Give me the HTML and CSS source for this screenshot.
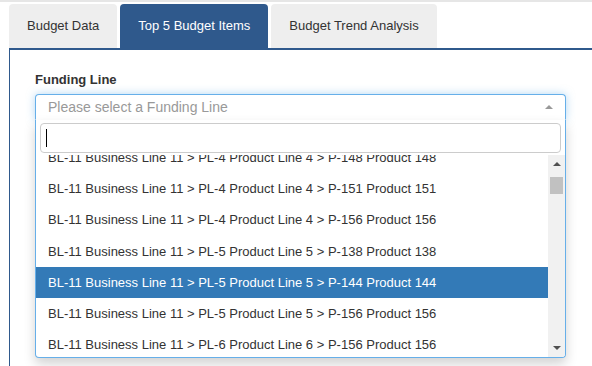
FILE: index.html
```html
<!DOCTYPE html>
<html lang="en">
  <head>
    <meta charset="UTF-8">
    <meta name="viewport" content="width=device-width, initial-scale=1.0">
    <title>Top 5 Budget Items</title>
    <link rel="stylesheet" href="styles.css">
  </head>
  <body>
    <div class="topline"></div>

    <!-- Tabs -->
    <ul class="tabs">
      <li class="tab">Budget Data</li>
      <li class="tab active">Top 5 Budget Items</li>
      <li class="tab">Budget Trend Analysis</li>
    </ul>

    <div class="panel">
      <label class="field-label">Funding Line</label>

      <div class="select">
        <span class="placeholder">Please select a Funding Line</span>
        <span class="arrow"></span>
      </div>

      <!-- Open dropdown -->
      <div class="dropdown">
        <div class="search">
          <div class="search-box"><span class="caret"></span></div>
        </div>
        <div class="results">
          <ul class="options">
            <li class="option first">BL-11 Business Line 11 &gt; PL-4 Product Line 4 &gt; P-148 Product 148</li>
            <li class="option">BL-11 Business Line 11 &gt; PL-4 Product Line 4 &gt; P-151 Product 151</li>
            <li class="option">BL-11 Business Line 11 &gt; PL-4 Product Line 4 &gt; P-156 Product 156</li>
            <li class="option">BL-11 Business Line 11 &gt; PL-5 Product Line 5 &gt; P-138 Product 138</li>
            <li class="option highlighted">BL-11 Business Line 11 &gt; PL-5 Product Line 5 &gt; P-144 Product 144</li>
            <li class="option">BL-11 Business Line 11 &gt; PL-5 Product Line 5 &gt; P-156 Product 156</li>
            <li class="option">BL-11 Business Line 11 &gt; PL-6 Product Line 6 &gt; P-156 Product 156</li>
          </ul>
          <div class="scrollbar">
            <span class="sb-up"></span>
            <span class="sb-thumb"></span>
            <span class="sb-space"></span>
            <span class="sb-down"></span>
          </div>
        </div>
      </div>
    </div>
  </body>
</html>
```

FILE: styles.css
```css
body {
  margin: 0;
  overflow: hidden;
  font-family: "Liberation Sans", Arial, sans-serif;
  font-size: 13px;
  color: #333;
  background: #fff;
}

.topline {
  height: 2px;
  background: #e6e6e6;
  margin-bottom: 2px;
}

.tabs {
  list-style: none;
  margin: 0;
  padding: 0 0 0 9px;
  display: flex;
  gap: 3px;
}

.tab {
  height: 44px;
  line-height: 44px;
  padding: 0 18px;
  background: #eee;
  border-radius: 4px 4px 0 0;
  white-space: nowrap;
}

.tab.active {
  background: #2f598c;
  color: #fff;
}

.panel {
  margin-left: 9px;
  border-top: 2px solid #2f598c;
  border-left: 1px solid #2f598c;
  height: calc(100vh - 48px);
  box-sizing: border-box;
  padding: 20px 0 0 25px;
}

.field-label {
  display: block;
  font-weight: bold;
  line-height: 20px;
  margin-bottom: 4px;
}

.select {
  width: 531px;
  height: 26px;
  box-sizing: border-box;
  border: 1px solid #66afe9;
  border-bottom-color: #fff;
  border-radius: 4px 4px 0 0;
  box-shadow: 0 0 8px rgba(102, 175, 233, 0.5);
  display: flex;
  align-items: center;
  padding: 0 12px;
  background: #fff;
}

.placeholder {
  flex: 1;
  color: #999;
  font-size: 14px;
}

.arrow {
  width: 0;
  height: 0;
  border-left: 4px solid transparent;
  border-right: 4px solid transparent;
  border-bottom: 4px solid #999;
}

.dropdown {
  width: 531px;
  box-sizing: border-box;
  border: 1px solid #66afe9;
  border-top: none;
  border-radius: 0 0 4px 4px;
  box-shadow: 0 6px 12px rgba(0, 0, 0, 0.175);
  background: #fff;
  overflow: hidden;
}

.search {
  padding: 3px 4px 2px;
}

.search-box {
  height: 30px;
  box-sizing: border-box;
  border: 1px solid #ccc;
  border-radius: 4px;
  display: flex;
  align-items: center;
  padding-left: 5px;
}

.caret {
  width: 1px;
  height: 18px;
  background: #000;
}

.results {
  display: flex;
  height: 202px;
}

.options {
  list-style: none;
  margin: 0;
  padding: 0;
  flex: 1;
  overflow: hidden;
}

.option {
  padding: 6px 12px;
  line-height: 19.2px;
  white-space: nowrap;
}

.option.first {
  margin-top: -13px;
}

.option.highlighted {
  background: #337ab7;
  color: #fff;
}

.scrollbar {
  width: 17px;
  background: #f1f1f1;
  display: flex;
  flex-direction: column;
  align-items: center;
}

.sb-up,
.sb-down {
  width: 0;
  height: 0;
  border-left: 4px solid transparent;
  border-right: 4px solid transparent;
}

.sb-up {
  border-bottom: 4px solid #505050;
  margin-top: 7px;
}

.sb-down {
  border-top: 4px solid #505050;
  margin-bottom: 7px;
}

.sb-thumb {
  width: 13px;
  height: 17px;
  background: #c1c1c1;
  margin-top: 11px;
}

.sb-space {
  flex: 1;
}
```
